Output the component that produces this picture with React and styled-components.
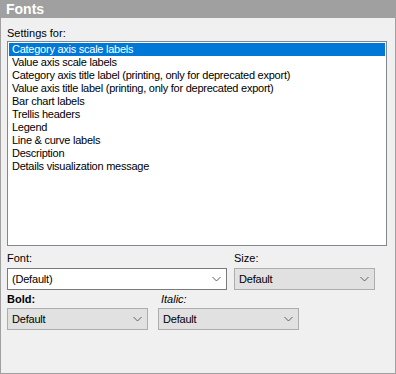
import React from "react";
import styled, { createGlobalStyle } from "styled-components";

const Global = createGlobalStyle`
  html, body { margin: 0; padding: 0; background: #ffffff; }
  body { font-family: "Liberation Sans", Arial, sans-serif; }
  * { box-sizing: border-box; }
`;

const Panel = styled.div`
  width: 396px;
  height: 374px;
  background: #f0f0f0;
  border: 1px solid #a0a0a0;
  border-top: none;
  display: flex;
  flex-direction: column;
`;

const Header = styled.div`
  height: 18px;
  margin: 0 -1px;
  padding-left: 6px;
  background: #a0a0a0;
  color: #ffffff;
  font-weight: bold;
  font-size: 14px;
  line-height: 19px;
`;

const Body = styled.div`
  padding: 8px 8px 0 6px;
  display: flex;
  flex-direction: column;
  font-size: 11px;
  color: #000;
`;

const Label = styled.div`
  height: 14px;
  line-height: 14px;
  white-space: nowrap;
  margin-bottom: ${(p) => p.$gap ?? 1}px;
  padding-left: ${(p) => p.$indent ?? 0}px;
  font-weight: ${(p) => (p.$bold ? "bold" : "normal")};
  font-style: ${(p) => (p.$italic ? "italic" : "normal")};
`;

const ListBox = styled.div`
  height: 205px;
  border: 1px solid #828790;
  background: #ffffff;
  padding: 1px;
`;

const Item = styled.div`
  height: 13px;
  line-height: 13px;
  padding-left: 3px;
  white-space: nowrap;
  letter-spacing: -0.25px;
  background: ${(p) => (p.$selected ? "#0078d7" : "transparent")};
  color: ${(p) => (p.$selected ? "#ffffff" : "#000000")};
`;

const Row = styled.div`
  display: flex;
  gap: ${(p) => p.$gap}px;
  margin-top: ${(p) => p.$top}px;
`;

const Field = styled.div`
  width: ${(p) => p.$w}px;
  display: flex;
  flex-direction: column;
`;

const Combo = styled.div`
  height: 22px;
  display: flex;
  align-items: center;
  justify-content: space-between;
  padding: 0 5px 0 4px;
  border: 1px solid ${(p) => (p.$editable ? "#7a7a7a" : "#adadad")};
  background: ${(p) => (p.$editable ? "#ffffff" : "#e1e1e1")};
  letter-spacing: -0.2px;
`;

const Chevron = () => (
  <svg width="9" height="6" viewBox="0 0 9 6">
    <path d="M0.5 1 L4.5 5 L8.5 1" fill="none" stroke="#606060" strokeWidth="1" />
  </svg>
);

const items = [
  "Category axis scale labels",
  "Value axis scale labels",
  "Category axis title label (printing, only for deprecated export)",
  "Value axis title label (printing, only for deprecated export)",
  "Bar chart labels",
  "Trellis headers",
  "Legend",
  "Line & curve labels",
  "Description",
  "Details visualization message",
];

export default function App() {
  return (
    <>
      <Global />
      <Panel>
        <Header>Fonts</Header>
        <Body>
          <Label>Settings for:</Label>
          <ListBox>
            {items.map((t, i) => (
              <Item key={t} $selected={i === 0}>
                {t}
              </Item>
            ))}
          </ListBox>
          <Row $gap={7} $top={5}>
            <Field $w={220}>
              <Label $gap={3}>Font:</Label>
              <Combo $editable>
                <span>(Default)</span>
                <Chevron />
              </Combo>
            </Field>
            <Field $w={141}>
              <Label $gap={3}>Size:</Label>
              <Combo>
                <span>Default</span>
                <Chevron />
              </Combo>
            </Field>
          </Row>
          <Row $gap={10} $top={2}>
            <Field $w={141}>
              <Label $gap={2} $bold>Bold:</Label>
              <Combo>
                <span>Default</span>
                <Chevron />
              </Combo>
            </Field>
            <Field $w={141}>
              <Label $gap={2} $italic $indent={3}>Italic:</Label>
              <Combo>
                <span>Default</span>
                <Chevron />
              </Combo>
            </Field>
          </Row>
        </Body>
      </Panel>
    </>
  );
}
